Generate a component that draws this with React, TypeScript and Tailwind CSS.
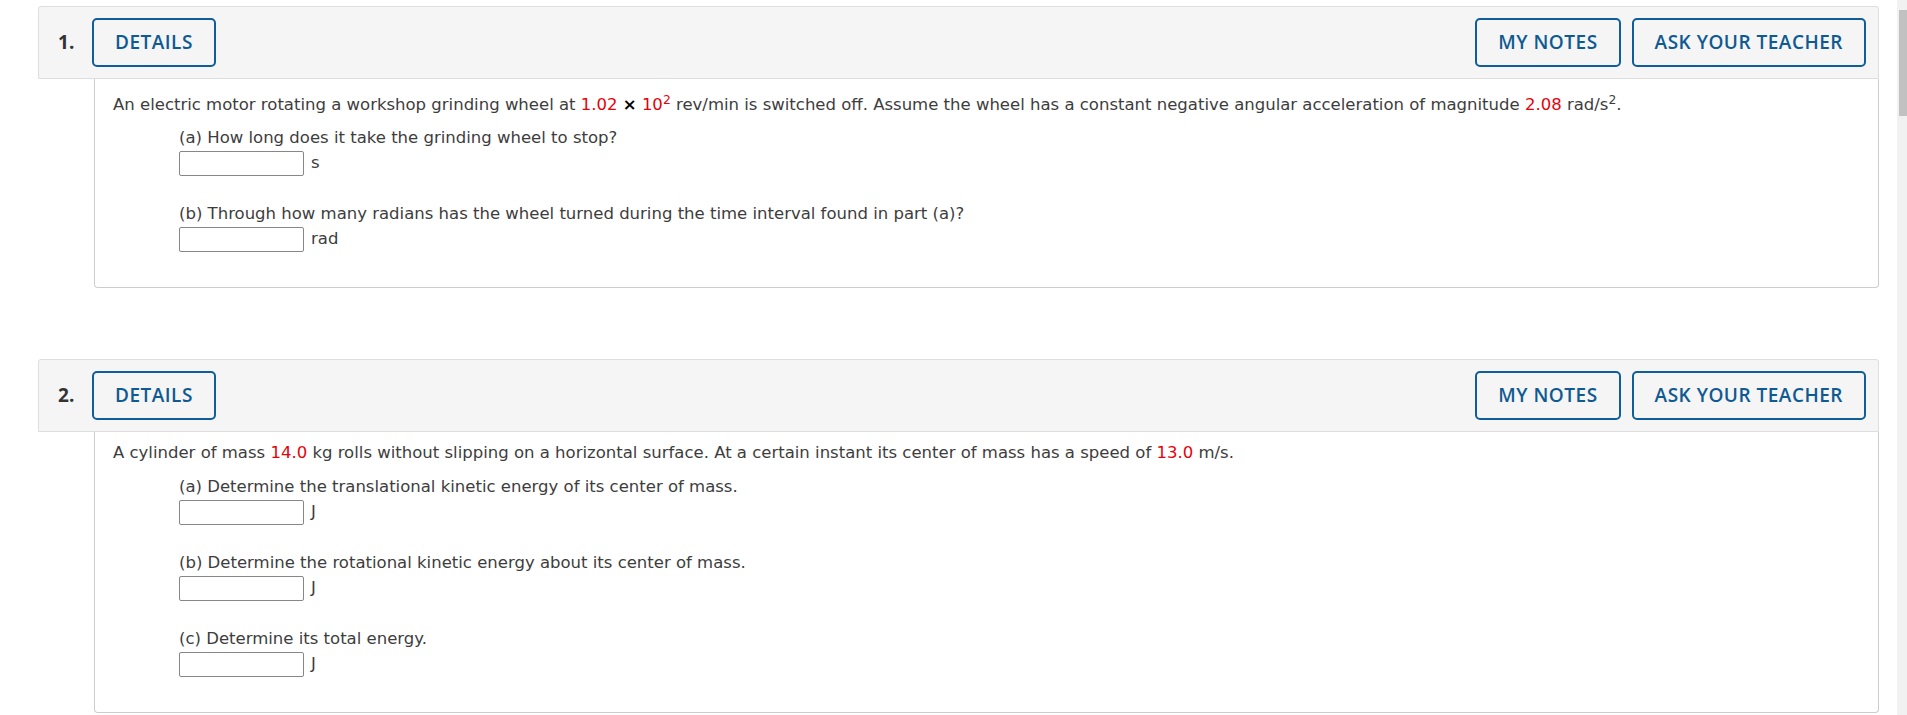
import React from "react";

type Part = { label: React.ReactNode; unit: string };

const Red: React.FC<{ children: React.ReactNode }> = ({ children }) => <span className="text-[#e8000b]">{children}</span>;

const HeaderButton: React.FC<{ children: React.ReactNode }> = ({ children }) => (
  <button className="flex h-[49px] items-center rounded-[5px] border-2 border-[#0f5e99] bg-transparent px-[21px] font-['Open_Sans',sans-serif] text-[19px] font-semibold tracking-[0.5px] text-[#0f5a92]">
    {children}
  </button>
);

const Question: React.FC<{ num: number; text: React.ReactNode; parts: Part[]; topPad: string; partsTop: string; className?: string }> = ({
  num,
  text,
  parts,
  topPad,
  partsTop,
  className,
}) => (
  <section className={className}>
    <div className="flex h-[73px] items-center rounded-t-[3px] border border-[#dedede] bg-[#f5f5f5] pl-[19px] pr-[12px]">
      <span className="w-[34px] font-['Open_Sans',sans-serif] text-[19px] font-bold text-[#333]">{num}.</span>
      <HeaderButton>DETAILS</HeaderButton>
      <div className="ml-auto flex gap-[11px]">
        <HeaderButton>MY NOTES</HeaderButton>
        <HeaderButton>ASK YOUR TEACHER</HeaderButton>
      </div>
    </div>
    <div className={`ml-[56px] rounded-b-[4px] border-x border-b border-[#cdcdcd] pb-[35px] pl-[18px] ${topPad}`}>
      <p className="leading-[22px] whitespace-nowrap">{text}</p>
      <div className={`flex flex-col gap-[27px] pl-[66px] ${partsTop}`}>
        {parts.map((p, i) => (
          <div key={i}>
            <p className="leading-[22px]">{p.label}</p>
            <div className="mt-[2px] flex items-center">
              <input type="text" className="h-[25px] w-[125px] rounded-[2px] border border-[#878787] bg-white" />
              <span className="ml-[7px]">{p.unit}</span>
            </div>
          </div>
        ))}
      </div>
    </div>
  </section>
);

export default function App() {
  return (
    <div className="flex h-[715px] w-full overflow-hidden bg-white font-['DejaVu_Sans',Verdana,sans-serif] text-[16.5px] text-[#3d3d3d]">
      <main className="flex-1 pl-[38px] pr-[18px] pt-[6px]">
        <Question
          num={1}
          topPad="pt-[15px]"
          partsTop="mt-[11px]"
          text={
            <>
              An electric motor rotating a workshop grinding wheel at <Red>1.02</Red>{" "}
              <span className="font-bold text-black">×</span>{" "}
              <Red>
                10<sup>2</sup>
              </Red>{" "}
              rev/min is switched off. Assume the wheel has a constant negative angular acceleration of magnitude <Red>2.08</Red> rad/s
              <sup>2</sup>.
            </>
          }
          parts={[
            { label: "(a) How long does it take the grinding wheel to stop?", unit: "s" },
            { label: "(b) Through how many radians has the wheel turned during the time interval found in part (a)?", unit: "rad" },
          ]}
        />
        <Question
          num={2}
          className="mt-[71px]"
          topPad="pt-[10px]"
          partsTop="mt-[12px]"
          text={
            <>
              A cylinder of mass <Red>14.0</Red> kg rolls without slipping on a horizontal surface. At a certain instant its center of mass has a
              speed of <Red>13.0</Red> m/s.
            </>
          }
          parts={[
            { label: "(a) Determine the translational kinetic energy of its center of mass.", unit: "J" },
            { label: "(b) Determine the rotational kinetic energy about its center of mass.", unit: "J" },
            { label: "(c) Determine its total energy.", unit: "J" },
          ]}
        />
      </main>
      <div className="w-[10px] bg-[#f1f1f1] pt-[10px] pl-[2px]">
        <div className="h-[106px] w-[8px] bg-[#c1c1c1]" />
      </div>
    </div>
  );
}
